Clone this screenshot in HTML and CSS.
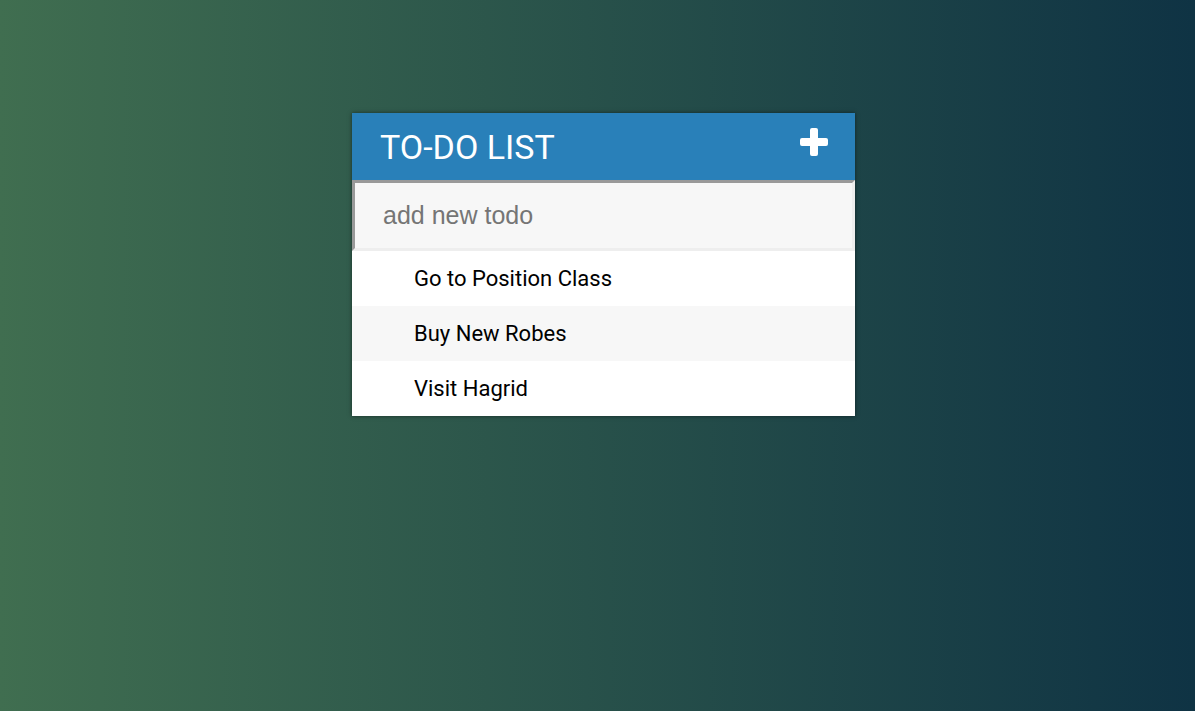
FILE: index.html
```html
<!DOCTYPE html>
<html lang="en">
<head>
<meta charset="utf-8">
<meta name="viewport" content="width=device-width, initial-scale=1">
<title>To-Do List</title>
<link rel="stylesheet" href="styles.css">
</head>
<body class="page">
<main class="card">
  <header class="card-header">
    <h1 class="card-title">To-Do List</h1>
    <button class="toggle" type="button" aria-label="Toggle new todo field">
      <svg class="toggle-icon" viewBox="0 0 28 28" aria-hidden="true">
        <path fill="currentColor" d="M12 0h4a2 2 0 0 1 2 2v8h8a2 2 0 0 1 2 2v4a2 2 0 0 1-2 2h-8v8a2 2 0 0 1-2 2h-4a2 2 0 0 1-2-2v-8H2a2 2 0 0 1-2-2v-4a2 2 0 0 1 2-2h8V2a2 2 0 0 1 2-2z"/>
      </svg>
    </button>
  </header>
  <input class="new-todo" type="text" placeholder="add new todo" aria-label="New todo">
  <ul class="todos">
    <li class="todo">Go to Position Class</li>
    <li class="todo">Buy New Robes</li>
    <li class="todo">Visit Hagrid</li>
  </ul>
</main>
</body>
</html>
```

FILE: styles.css
```css
* {
  box-sizing: border-box;
}

.page {
  margin: 0;
  min-height: 100vh;
  padding: 113px 0 0 12px;
  font-family: Roboto, sans-serif;
  background: linear-gradient(to right, #406e50, #0f3344);
}

.card {
  max-width: 503px;
  margin: 0 auto;
  background: #fff;
  box-shadow: 0 0 4px rgba(0, 0, 0, 0.5);
}

.card-header {
  display: flex;
  justify-content: space-between;
  align-items: flex-start;
  padding: 15px 27px 14px 28px;
  background: #2980b9;
  color: #fff;
}

.card-title {
  margin: 0;
  font-size: 34px;
  line-height: 38px;
  font-weight: 400;
  text-transform: uppercase;
}

.toggle {
  display: block;
  padding: 0;
  border: 0;
  background: none;
  color: inherit;
  cursor: pointer;
}

.toggle-icon {
  display: block;
  width: 28px;
  height: 28px;
}

.new-todo {
  display: block;
  width: 100%;
  padding: 18px 28px;
  border: 3px solid;
  border-color: #999 #eee #eee #999;
  border-radius: 0;
  background: #f7f7f7;
  color: #2980b9;
  font-family: "Liberation Sans", Arial, sans-serif;
  font-size: 25px;
  line-height: 29px;
}

.new-todo::placeholder {
  color: #757575;
}

.todos {
  margin: 0;
  padding: 0;
  list-style: none;
}

.todo {
  padding: 0 62px;
  font-size: 22px;
  line-height: 55px;
  color: #000;
}

.todo:nth-child(even) {
  background: #f7f7f7;
}
```
